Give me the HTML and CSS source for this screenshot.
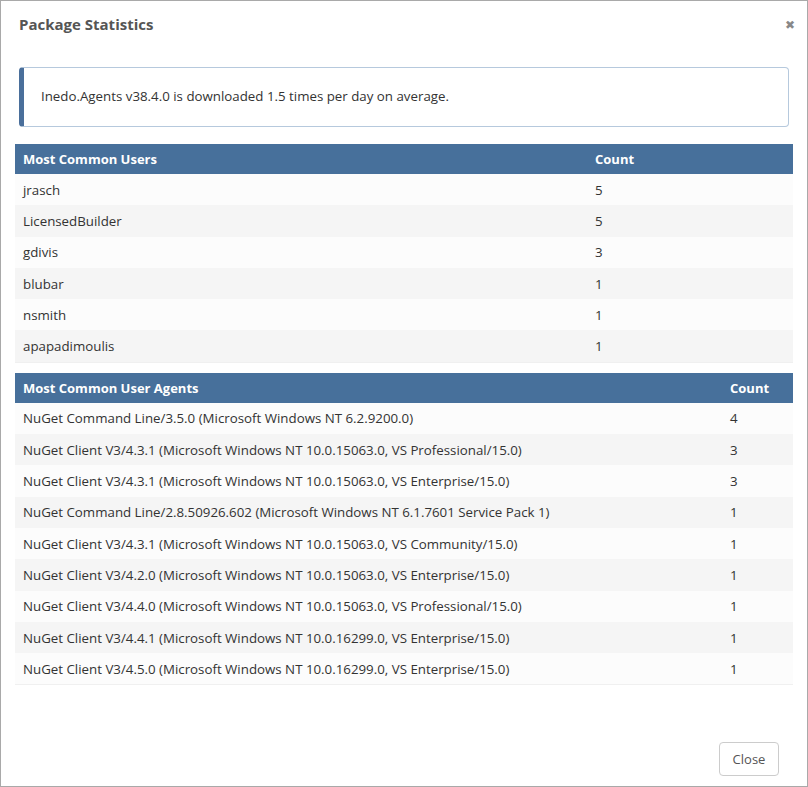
FILE: index.html
```html
<!DOCTYPE html>
<html>
<head>
<meta charset="utf-8">
<link rel="stylesheet" href="styles.css">
</head>
<body>
<div class="modal">
  <div class="modal-header">
    <h4 class="title">Package Statistics</h4>
    <span class="close">&#x2716;</span>
  </div>
  <div class="modal-body">
    <div class="info"><span>Inedo.Agents v38.4.0 is downloaded 1.5 times per day on average.</span></div>
    <table class="stats users">
      <thead><tr><th>Most Common Users</th><th class="count">Count</th></tr></thead>
      <tbody>
        <tr><td>jrasch</td><td>5</td></tr>
        <tr><td>LicensedBuilder</td><td>5</td></tr>
        <tr><td>gdivis</td><td>3</td></tr>
        <tr><td>blubar</td><td>1</td></tr>
        <tr><td>nsmith</td><td>1</td></tr>
        <tr><td>apapadimoulis</td><td>1</td></tr>
      </tbody>
    </table>
    <table class="stats agents">
      <thead><tr><th>Most Common User Agents</th><th class="count">Count</th></tr></thead>
      <tbody>
        <tr><td>NuGet Command Line/3.5.0 (Microsoft Windows NT 6.2.9200.0)</td><td>4</td></tr>
        <tr><td>NuGet Client V3/4.3.1 (Microsoft Windows NT 10.0.15063.0, VS Professional/15.0)</td><td>3</td></tr>
        <tr><td>NuGet Client V3/4.3.1 (Microsoft Windows NT 10.0.15063.0, VS Enterprise/15.0)</td><td>3</td></tr>
        <tr><td>NuGet Command Line/2.8.50926.602 (Microsoft Windows NT 6.1.7601 Service Pack 1)</td><td>1</td></tr>
        <tr><td>NuGet Client V3/4.3.1 (Microsoft Windows NT 10.0.15063.0, VS Community/15.0)</td><td>1</td></tr>
        <tr><td>NuGet Client V3/4.2.0 (Microsoft Windows NT 10.0.15063.0, VS Enterprise/15.0)</td><td>1</td></tr>
        <tr><td>NuGet Client V3/4.4.0 (Microsoft Windows NT 10.0.15063.0, VS Professional/15.0)</td><td>1</td></tr>
        <tr><td>NuGet Client V3/4.4.1 (Microsoft Windows NT 10.0.16299.0, VS Enterprise/15.0)</td><td>1</td></tr>
        <tr><td>NuGet Client V3/4.5.0 (Microsoft Windows NT 10.0.16299.0, VS Enterprise/15.0)</td><td>1</td></tr>
      </tbody>
    </table>
  </div>
  <div class="modal-footer">
    <button class="btn">Close</button>
  </div>
</div>
</body>
</html>
```
FILE: styles.css
```css
html, body {
  margin: 0;
  padding: 0;
  background: #fff;
}
body {
  font-family: "Open Sans", "Noto Sans", sans-serif;
  font-size: 13.3px;
  color: #333;
}
.modal {
  box-sizing: border-box;
  width: 808px;
  height: 787px;
  border: 1px solid #a9a9a9;
  display: flex;
  flex-direction: column;
}
.modal-header {
  display: flex;
  align-items: center;
  justify-content: space-between;
  height: 46px;
  padding: 0 12px 0 18px;
}
.title {
  margin: 0;
  font-size: 15px;
  font-weight: 700;
  color: #555;
}
.close {
  font-size: 11.5px;
  color: #888;
}
.modal-body {
  flex: 1;
  padding: 20px 14px 0 14px;
}
.info {
  margin: 0 4px 17px 4px;
  height: 60px;
  box-sizing: border-box;
  border: 1px solid #b6c9dd;
  border-left: 5px solid #4a6f9b;
  border-radius: 4px;
  display: flex;
  align-items: center;
  padding-left: 17px;
  padding-bottom: 2px;
  color: #333;
}
.stats {
  width: 100%;
  border-collapse: collapse;
  margin-bottom: 10px;
}
.stats th {
  background: #47709b;
  color: #fff;
  text-align: left;
  font-weight: 700;
  font-size: 13px;
  height: 30px;
  padding: 0 8px;
}
.stats td {
  height: 31.3px;
  padding: 0 8px;
}
.stats tbody tr:nth-child(odd) td {
  background: #fcfcfc;
}
.stats tbody tr:nth-child(even) td {
  background: #f5f5f5;
}
.stats tbody tr:last-child td {
  border-bottom: 1px solid #f0f0f0;
}
.users .count { width: 190px; }
.agents .count { width: 55px; }
.modal-footer {
  display: flex;
  justify-content: flex-end;
  padding: 0 28px 10px 0;
}
.btn {
  font-family: inherit;
  font-size: 13px;
  color: #555;
  background: #fff;
  border: 1px solid #ccc;
  border-radius: 4px;
  width: 60px;
  height: 34px;
}
```
